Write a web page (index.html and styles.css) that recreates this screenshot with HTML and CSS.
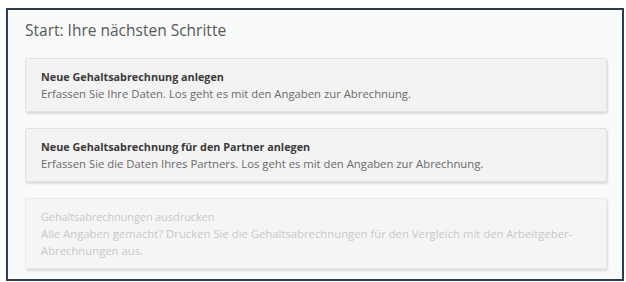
FILE: index.html
```html
<!DOCTYPE html>
<html lang="de">
<head>
    <meta charset="UTF-8">
    <meta name="viewport" content="width=device-width, initial-scale=1.0">
    <title>Start: Ihre nächsten Schritte</title>
    <link rel="stylesheet" href="styles.css">
</head>
<body>
    <div class="frame">
        <h1 class="heading">Start: Ihre nächsten Schritte</h1>

        <div class="steps">
            <div class="step">
                <div class="step-title">Neue Gehaltsabrechnung anlegen</div>
                <div class="step-text">Erfassen Sie Ihre Daten. Los geht es mit den Angaben zur Abrechnung.</div>
            </div>

            <div class="step">
                <div class="step-title">Neue Gehaltsabrechnung für den Partner anlegen</div>
                <div class="step-text">Erfassen Sie die Daten Ihres Partners. Los geht es mit den Angaben zur Abrechnung.</div>
            </div>

            <!-- not available yet -->
            <div class="step disabled">
                <div class="step-title">Gehaltsabrechnungen ausdrucken</div>
                <div class="step-text">Alle Angaben gemacht? Drucken Sie die Gehaltsabrechnungen für den Vergleich mit den Arbeitgeber-Abrechnungen aus.</div>
            </div>
        </div>
    </div>
</body>
</html>
```

FILE: styles.css
```css
body {
    margin: 0;
    padding: 0;
    background: #ffffff;
    font-family: "Open Sans", "Noto Sans", sans-serif;
}
.frame {
    margin: 8px 2px 0 6px;
    border: 2px solid #2e3d4b;
    background: #f9fafa;
    padding: 0 15px 10px 17px;
}
.heading {
    margin: 0;
    padding: 10px 0 0 0;
    height: 48px;
    box-sizing: border-box;
    font-size: 15.5px;
    font-weight: normal;
    line-height: 20px;
    color: #585858;
}
.steps {
    display: flex;
    flex-direction: column;
    gap: 16px;
}
.step {
    background: #f3f3f3;
    border: 1px solid #e2e2e2;
    border-radius: 2px;
    box-shadow: 1px 2px 2px rgba(0, 0, 0, 0.12);
    padding: 10px 15px 9px 15px;
}
.step-title {
    font-size: 10.8px;
    font-weight: bold;
    line-height: 16px;
    color: #3a3a3a;
}
.step-text {
    font-size: 11.3px;
    line-height: 17px;
    color: #6a6a6a;
}
.step.disabled {
    background: #f5f5f5;
    border-color: #ebebeb;
}
.step.disabled .step-title,
.step.disabled .step-text {
    color: #c8c8c8;
    font-weight: normal;
}
```
